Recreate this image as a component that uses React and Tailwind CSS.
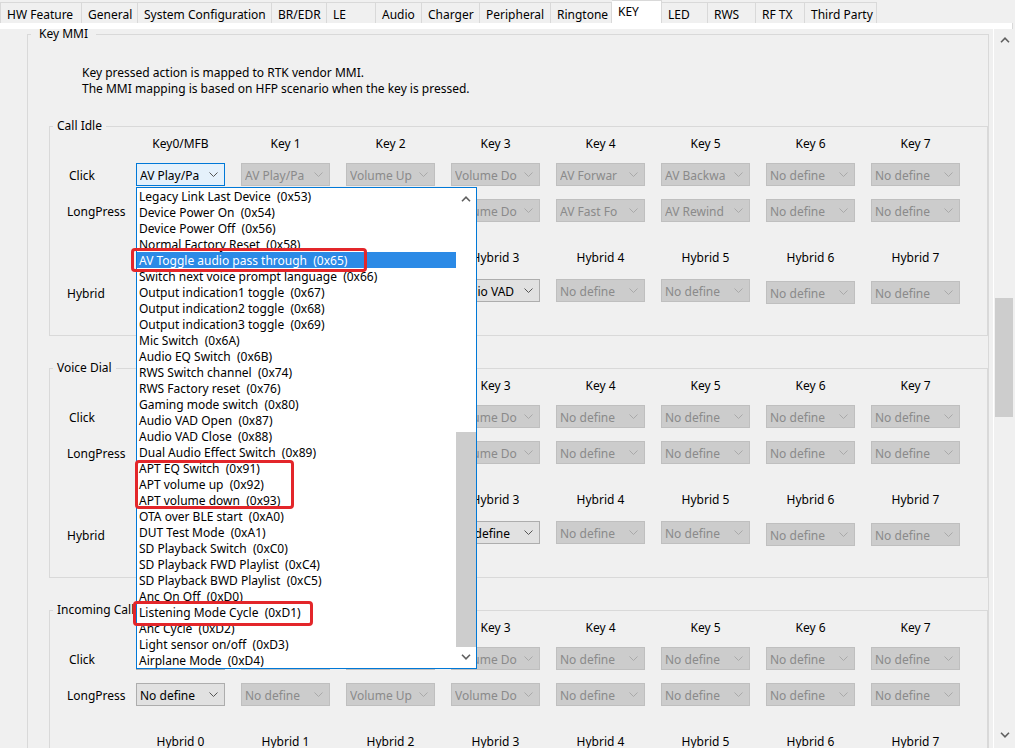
import React from 'react';

const tabs = [
    ['HW Feature', 'w-[82px]'],
    ['General', 'w-[56px]'],
    ['System Configuration', 'w-[134px]'],
    ['BR/EDR', 'w-[55px]'],
    ['LE', 'w-[49px]'],
    ['Audio', 'w-[46px]'],
    ['Charger', 'w-[58px]'],
    ['Peripheral', 'w-[71px]'],
    ['Ringtone', 'w-[61px]'],
    ['KEY', 'w-[50px]'],
    ['LED', 'w-[46px]'],
    ['RWS', 'w-[48px]'],
    ['RF TX', 'w-[49px]'],
    ['Third Party', 'w-[72px]'],
];

const mmiList = [
    'Legacy Link Last Device  (0x53)',
    'Device Power On  (0x54)',
    'Device Power Off  (0x56)',
    'Normal Factory Reset  (0x58)',
    'AV Toggle audio pass through  (0x65)',
    'Switch next voice prompt language  (0x66)',
    'Output indication1 toggle  (0x67)',
    'Output indication2 toggle  (0x68)',
    'Output indication3 toggle  (0x69)',
    'Mic Switch  (0x6A)',
    'Audio EQ Switch  (0x6B)',
    'RWS Switch channel  (0x74)',
    'RWS Factory reset  (0x76)',
    'Gaming mode switch  (0x80)',
    'Audio VAD Open  (0x87)',
    'Audio VAD Close  (0x88)',
    'Dual Audio Effect Switch  (0x89)',
    'APT EQ Switch  (0x91)',
    'APT volume up  (0x92)',
    'APT volume down  (0x93)',
    'OTA over BLE start  (0xA0)',
    'DUT Test Mode  (0xA1)',
    'SD Playback Switch  (0xC0)',
    'SD Playback FWD Playlist  (0xC4)',
    'SD Playback BWD Playlist  (0xC5)',
    'Anc On Off  (0xD0)',
    'Listening Mode Cycle  (0xD1)',
    'Anc Cycle  (0xD2)',
    'Light sensor on/off  (0xD3)',
    'Airplane Mode  (0xD4)',
];

const keyLabels = ['Key0/MFB', 'Key 1', 'Key 2', 'Key 3', 'Key 4', 'Key 5', 'Key 6', 'Key 7'];
const hybridLabels = ['Hybrid 0', 'Hybrid 1', 'Hybrid 2', 'Hybrid 3', 'Hybrid 4', 'Hybrid 5', 'Hybrid 6', 'Hybrid 7'];

const nd = ['No define', 'off'];

// combo texts are what the closed boxes show (Windows cuts them short)
const groups = [
    {
        title: 'Call Idle',
        click: [['AV Play/Pa', 'open'], ['AV Play/Pa', 'off'], ['Volume Up', 'off'], ['Volume Do', 'off'], ['AV Forwar', 'off'], ['AV Backwa', 'off'], nd, nd],
        long: [['No define', 'on'], ['No define', 'off'], ['Volume Up', 'off'], ['Volume Do', 'off'], ['AV Fast Fo', 'off'], ['AV Rewind', 'off'], nd, nd],
        hybrid: [['No define', 'on'], nd, nd, ['Audio VAD', 'on'], nd, nd, nd, nd],
    },
    {
        title: 'Voice Dial',
        click: [['No define', 'on'], nd, nd, ['Volume Do', 'off'], nd, nd, nd, nd],
        long: [['No define', 'on'], nd, nd, ['Volume Do', 'off'], nd, nd, nd, nd],
        hybrid: [['No define', 'on'], nd, nd, ['No define', 'on'], nd, nd, nd, nd],
    },
    {
        title: 'Incoming Call',
        click: [['No define', 'on'], nd, nd, ['Volume Do', 'off'], nd, nd, nd, nd],
        long: [['No define', 'on'], nd, ['Volume Up', 'off'], ['Volume Do', 'off'], nd, nd, nd, nd],
        hybrid: [['No define', 'on'], nd, nd, nd, nd, nd, nd, nd],
    },
];

const comboLook = {
    off: 'bg-[#cccccc] border-[#bfbfbf] text-[#8a8a8a]',
    on: 'bg-[#e1e1e1] border-[#adadad] text-black',
    open: 'bg-[#e5f1fb] border-[#0078d7] text-black',
};

const Chevron = ({ className = '' }) => (
    <svg width="9" height="5" viewBox="0 0 9 5" className={className} fill="none">
        <path d="M0.5 0.5 L4.5 4.5 L8.5 0.5" stroke="currentColor" strokeWidth="1" />
    </svg>
);

const ArrowGlyph = ({ up = false }) => (
    <svg width="10" height="6" viewBox="0 0 10 6" fill="none" className="text-[#606060]">
        <path d={up ? 'M1 5.2 L5 1.2 L9 5.2' : 'M1 0.8 L5 4.8 L9 0.8'} stroke="currentColor" strokeWidth="1.6" />
    </svg>
);

const Combo = ({ text, state, className = '' }) => (
    <div className={`flex h-[23px] w-[89px] shrink-0 items-center border ${comboLook[state]} ${className}`}>
        <span className="ml-[3px] w-[64px] translate-y-[1px] overflow-hidden whitespace-nowrap leading-[16px]">{text}</span>
        <Chevron className={`ml-auto mr-[6px] ${state === 'off' ? 'text-[#a9a9a9]' : 'text-[#555555]'}`} />
    </div>
);

const HeaderRow = ({ labels, className = '' }) => (
    <div className={`flex h-[16px] ${className}`}>
        <div className="w-[69px] shrink-0" />
        <div className="flex gap-[16px]">
            {labels.map((l) => (
                <div key={l} className="w-[89px] translate-y-[1px] text-center leading-[16px] whitespace-nowrap">{l}</div>
            ))}
        </div>
    </div>
);

const ComboRow = ({ label, labelClass, combos, className = '', hybrid = false }) => (
    <div className={`flex ${hybrid ? 'items-start' : 'items-center'} ${className}`}>
        <div className={`w-[69px] shrink-0 translate-y-[1px] leading-[16px] whitespace-nowrap ${labelClass}`}>{label}</div>
        <div className="flex items-start gap-[16px]">
            {combos.map(([t, s], i) => (
                <Combo key={i} text={t} state={s} className={hybrid && i >= 6 ? 'mt-[2px]' : ''} />
            ))}
        </div>
    </div>
);

const Group = ({ g, className = '' }) => (
    <fieldset className={`ml-[21px] w-[939px] border border-[#d9d9d9] ${className}`}>
        <legend className="ml-[3px] px-[4px] leading-[16px]">{g.title}</legend>
        <div className="pl-[17px] pb-[31px]">
            <HeaderRow labels={keyLabels} className="mt-[1px]" />
            <ComboRow label="Click" labelClass="pl-[2px]" combos={g.click} className="mt-[12px]" />
            <ComboRow label="LongPress" combos={g.long} className="mt-[13px]" />
            <HeaderRow labels={hybridLabels} className="mt-[27px]" />
            <ComboRow label="Hybrid" labelClass="mt-[6px]" combos={g.hybrid} className="mt-[14px]" hybrid />
        </div>
    </fieldset>
);

const App = () => {
    return (
        <div className="relative h-[748px] w-[1015px] overflow-hidden bg-[#f0f0f0] text-[12px] text-black font-['Noto_Sans',sans-serif]">
            {/* tab strip */}
            <div className="flex h-[23px] items-end">
                {tabs.map(([name, w], i) => {
                    const active = name === 'KEY';
                    return (
                        <div
                            key={name}
                            className={`${w} shrink-0 whitespace-nowrap border-t border-r border-[#d9d9d9] pl-[6px] leading-[16px] ${i === 0 ? 'border-l' : ''} ${
                                active ? 'h-[23px] bg-white pt-[3px]' : 'h-[21px] bg-[#f0f0f0] pt-[4px]'
                            }`}
                        >
                            {name}
                        </div>
                    );
                })}
            </div>
            <div className="h-[6px] w-[1013px] border-r border-[#d9d9d9] bg-white" />

            <div className="flex h-[719px]">
                {/* scroll content */}
                <div className="w-[993px] shrink-0">
                    <fieldset className="ml-[27px] w-[958px] border border-[#d9d9d9] pb-[40px]">
                        <legend className="ml-[3px] px-[8px] leading-[10px]">Key MMI</legend>
                        <div className="mt-[26px] pl-[54px] leading-[16px]">
                            <p>Key pressed action is mapped to RTK vendor MMI.</p>
                            <p>The MMI mapping is based on HFP scenario when the key is pressed.</p>
                        </div>
                        <Group g={groups[0]} className="mt-[21px]" />
                        <Group g={groups[1]} className="mt-[24px]" />
                        <Group g={groups[2]} className="mt-[24px]" />
                    </fieldset>
                </div>

                {/* vertical scrollbar */}
                <div className="flex w-[22px] shrink-0 flex-col border-l border-white bg-[#f0f0f0]">
                    <div className="flex h-[22px] items-center justify-center">
                        <ArrowGlyph up />
                    </div>
                    <div className="ml-[1px] mt-[247px] h-[119px] w-[18px] bg-[#cdcdcd]" />
                    <div className="mt-auto mb-[2px] flex h-[22px] items-center justify-center">
                        <ArrowGlyph />
                    </div>
                </div>
            </div>

            {/* open drop-down list */}
            <div className="absolute left-[136px] top-[187px] flex h-[482px] w-[341px] border border-[#0078d7] bg-white">
                <div className="w-[319px]">
                    {mmiList.map((item, i) => (
                        <div
                            key={item}
                            className={`h-[16px] whitespace-pre pl-[2px] pt-[1px] leading-[16px] ${i === 4 ? 'bg-[#2b8ae6] text-white' : ''}`}
                        >
                            {item}
                        </div>
                    ))}
                </div>
                <div className="flex w-[20px] flex-col bg-white">
                    <div className="flex h-[22px] items-center justify-center">
                        <ArrowGlyph up />
                    </div>
                    <div className="mt-[222px] h-[215px] w-[20px] bg-[#cdcdcd]" />
                    <div className="flex h-[20px] items-center justify-center">
                        <ArrowGlyph />
                    </div>
                </div>
            </div>

            {/* red annotation boxes */}
            <div className="absolute left-[131px] top-[248px] h-[24px] w-[236px] rounded-[4px] border-[3px] border-[#e3262a]" />
            <div className="absolute left-[135px] top-[460px] h-[49px] w-[159px] rounded-[4px] border-[3px] border-[#e3262a]" />
            <div className="absolute left-[133px] top-[601px] h-[25px] w-[180px] rounded-[4px] border-[3px] border-[#e3262a]" />
        </div>
    );
};

export default App;
